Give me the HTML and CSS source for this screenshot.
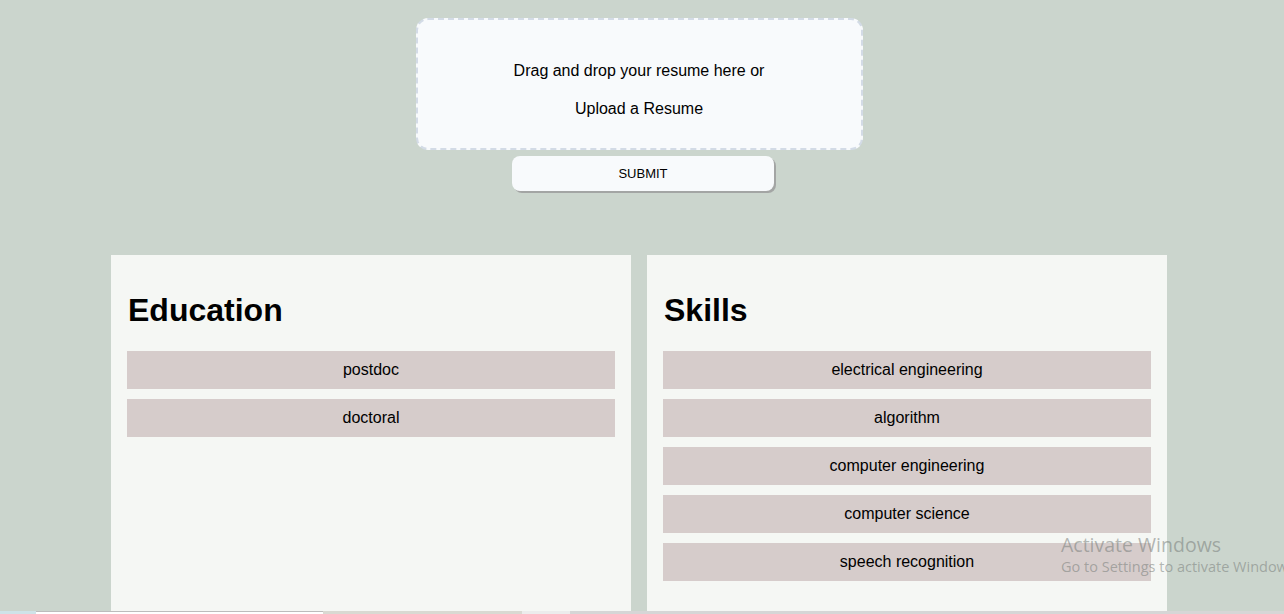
FILE: index.html
```html
<!DOCTYPE html>
<html>
<head>
<meta charset="utf-8">
<link rel="stylesheet" href="styles.css">
</head>
<body>
<div class="page">
  <section class="upload">
    <div class="dropzone">
      <p class="drop-text">Drag and drop your resume here or</p>
      <p class="drop-text">Upload a Resume</p>
    </div>
    <button class="submit">SUBMIT</button>
  </section>
  <section class="cards">
    <div class="card">
      <h1 class="card-title">Education</h1>
      <div class="list">
        <div class="item">postdoc</div>
        <div class="item">doctoral</div>
      </div>
    </div>
    <div class="card">
      <h1 class="card-title">Skills</h1>
      <div class="list">
        <div class="item">electrical engineering</div>
        <div class="item">algorithm</div>
        <div class="item">computer engineering</div>
        <div class="item">computer science</div>
        <div class="item">speech recognition</div>
      </div>
    </div>
  </section>
</div>
<div class="watermark">
  <div class="wm-title">Activate Windows</div>
  <div class="wm-sub">Go to Settings to activate Windows.</div>
</div>
<div class="taskbar">
  <div class="tb-a"></div>
  <div class="tb-b"></div>
  <div class="tb-c"></div>
  <div class="tb-d"></div>
  <div class="tb-e"></div>
</div>
</body>
</html>
```

FILE: styles.css
```css
* { box-sizing: border-box; }
html, body {
  margin: 0;
  padding: 0;
  height: 100%;
  overflow: hidden;
}
body {
  background: #cbd5cd;
  font-family: "Liberation Sans", Arial, sans-serif;
  color: #000;
  position: relative;
}
.page {
  display: flex;
  flex-direction: column;
  align-items: center;
  padding-top: 18px;
  padding-right: 6px;
}
.upload {
  display: flex;
  flex-direction: column;
  align-items: center;
}
.dropzone {
  width: 447px;
  height: 132px;
  background: #f8fafc;
  border: 2px dashed #d3dbe6;
  border-radius: 12px;
  display: flex;
  flex-direction: column;
  align-items: center;
  padding-top: 42px;
  gap: 20px;
}
.drop-text {
  margin: 0;
  font-size: 16px;
  line-height: 18px;
}
.submit {
  margin-top: 6px;
  margin-left: 8px;
  width: 262px;
  height: 35px;
  background: #f8fafc;
  border: none;
  border-radius: 8px;
  box-shadow: 2px 2px 0 #a3a5a4;
  font-family: "Liberation Sans", Arial, sans-serif;
  font-size: 13px;
  color: #000;
  padding: 0;
}
.cards {
  margin-top: 64px;
  display: flex;
  gap: 16px;
}
.card {
  width: 520px;
  height: 400px;
  background: #f5f7f4;
  padding: 16px 16px;
}
.card-title {
  font-size: 32px;
  font-weight: bold;
  margin: 21px 0 22px 1px;
  line-height: 37px;
}
.list {
  display: flex;
  flex-direction: column;
  gap: 10px;
}
.item {
  height: 38px;
  background: #d6cccb;
  display: flex;
  align-items: center;
  justify-content: center;
  font-size: 16px;
}
.watermark {
  position: absolute;
  left: 1061px;
  top: 533px;
  color: rgba(120, 125, 122, 0.55);
  font-family: "Open Sans", "Noto Sans", sans-serif;
  white-space: nowrap;
}
.wm-title {
  font-size: 19.5px;
  line-height: 23px;
}
.wm-sub {
  font-size: 14.5px;
  line-height: 22px;
}
.taskbar {
  position: absolute;
  left: 0;
  right: 0;
  bottom: 0;
  height: 3px;
  display: flex;
}
.tb-a { width: 36px; background: #cfe3e8; }
.tb-b { width: 287px; background: #ffffff; border-top: 1px solid #bcbcbc; }
.tb-c { width: 199px; background: #d9d9d2; }
.tb-d { width: 48px; background: #ececec; }
.tb-e { flex: 1; background: #d6d6d6; }
```
